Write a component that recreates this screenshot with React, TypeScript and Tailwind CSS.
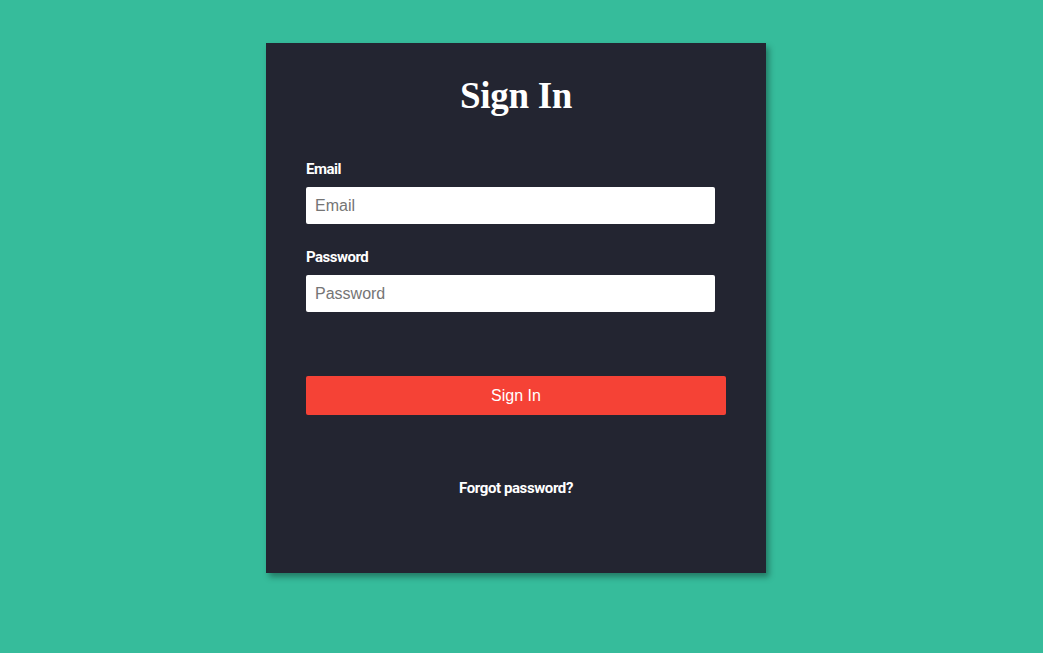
export default function App() {
  return (
    <div className="min-h-screen w-full bg-[#36bc9b] pt-[43px]">
      <div className="ml-[266px] w-[500px] h-[530px] bg-[#232531] shadow-[3px_4px_6px_rgba(0,0,0,0.35)] px-10 pt-[26px]">
        <h1 className="text-center text-white text-[37px] leading-[54px] font-bold tracking-[-0.3px] font-['Liberation_Serif',serif]">
          Sign In
        </h1>
        <form className="mt-[37px]" onSubmit={(e) => e.preventDefault()}>
          <label className="block text-white text-[15px] leading-[18px] font-bold tracking-[-0.5px] font-['Roboto',sans-serif]">
            Email
          </label>
          <input
            type="email"
            placeholder="Email"
            className="mt-[9px] block w-[409px] h-[37px] bg-white rounded-[2px] px-[9px] text-[16px] text-gray-700 placeholder:text-[#757575] outline-none font-['Liberation_Sans',Arial,sans-serif]"
          />
          <label className="mt-[24px] block text-white text-[15px] leading-[18px] font-bold tracking-[-0.5px] font-['Roboto',sans-serif]">
            Password
          </label>
          <input
            type="password"
            placeholder="Password"
            className="mt-[9px] block w-[409px] h-[37px] bg-white rounded-[2px] px-[9px] text-[16px] text-gray-700 placeholder:text-[#757575] outline-none font-['Liberation_Sans',Arial,sans-serif]"
          />
          <button
            type="submit"
            className="mt-[64px] block w-[420px] h-[39px] bg-[#f54236] rounded-[2px] text-white text-[16px] font-['Liberation_Sans',Arial,sans-serif]"
          >
            Sign In
          </button>
        </form>
        <p className="mt-[62px] text-center text-white text-[15px] font-bold tracking-[-0.4px] font-['Roboto',sans-serif]">
          Forgot password?
        </p>
      </div>
    </div>
  );
}
